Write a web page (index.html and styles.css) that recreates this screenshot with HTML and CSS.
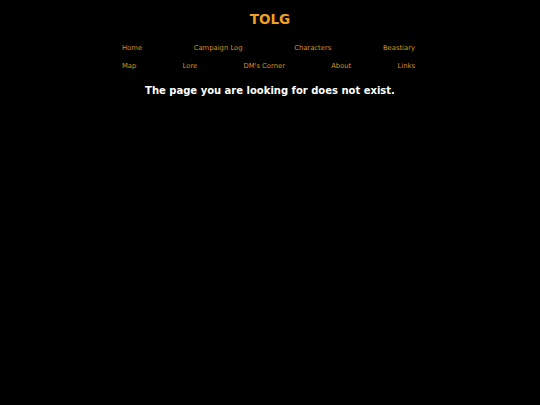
FILE: index.html
```html
<!DOCTYPE html>
<html>
<head>
<meta charset="utf-8">
<link rel="stylesheet" href="styles.css">
</head>
<body>
<header class="site-header">
  <h1 class="site-title">TOLG</h1>
  <nav class="site-nav">
    <div class="nav-row">
      <a href="#">Home</a>
      <a href="#">Campaign Log</a>
      <a href="#">Characters</a>
      <a href="#">Beastiary</a>
    </div>
    <div class="nav-row">
      <a href="#">Map</a>
      <a href="#">Lore</a>
      <a href="#">DM's Corner</a>
      <a href="#">About</a>
      <a href="#">Links</a>
    </div>
  </nav>
</header>
<main class="content">
  <h2 class="not-found">The page you are looking for does not exist.</h2>
</main>
</body>
</html>
```
FILE: styles.css
```css
html, body {
  margin: 0;
  padding: 0;
  background: #000;
  height: 100%;
}
body {
  font-family: "DejaVu Sans", Verdana, sans-serif;
  color: #fff;
}
.site-header {
  display: flex;
  flex-direction: column;
  align-items: center;
  padding-top: 11px;
}
.site-title {
  margin: 0;
  font-size: 13.5px;
  font-weight: bold;
  color: #f0a020;
  line-height: 16px;
}
.site-nav {
  width: 293px;
  margin-top: 17px;
  margin-right: 3px;
  display: flex;
  flex-direction: column;
  gap: 9px;
}
.nav-row {
  display: flex;
  justify-content: space-between;
}
.nav-row a {
  color: #d89018;
  text-decoration: none;
  font-size: 6.8px;
  line-height: 9px;
}
.content {
  display: flex;
  justify-content: center;
  margin-top: 13px;
}
.not-found {
  margin: 0;
  font-size: 10px;
  font-weight: bold;
  color: #fff;
  line-height: 14px;
}
```
